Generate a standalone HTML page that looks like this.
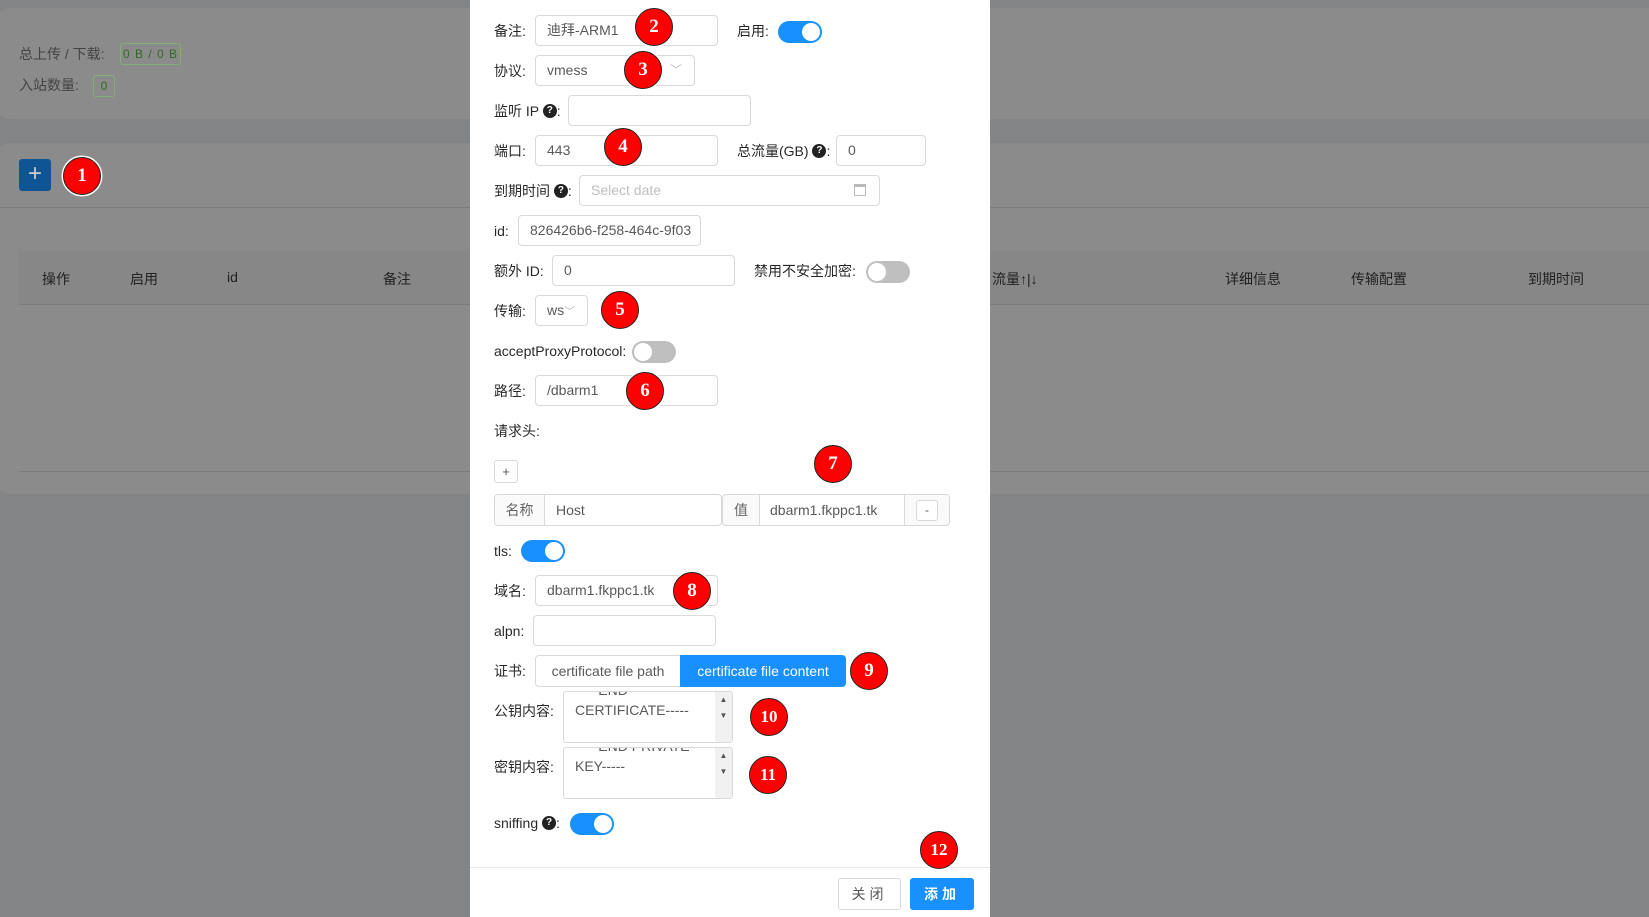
<!DOCTYPE html>
<html><head><meta charset="utf-8"><style>
*{box-sizing:border-box;margin:0;padding:0}
body{width:1649px;height:917px;overflow:hidden;background:#838486;font-family:"Liberation Sans","Noto Sans CJK SC",sans-serif;font-size:14px;color:#333;position:relative}
.a{position:absolute}
.card{position:absolute;background:#8b8b8b;border-radius:22px}
.lbl{position:absolute;color:rgba(0,0,0,.85);font-size:14px;line-height:20px;white-space:nowrap}
.inp{position:absolute;height:31px;border:1px solid #d9d9d9;border-radius:4px;background:#fff;color:#595959;font-size:14px;line-height:29px;padding-left:11px;white-space:nowrap;overflow:hidden}
.tg{position:absolute;width:44px;height:22px;border-radius:11px;background:#1890ff}
.tg::after{content:"";position:absolute;top:2px;right:2px;width:18px;height:18px;border-radius:50%;background:#fff}
.tg.off{background:#bfbfbf}.tg.off::after{right:auto;left:2px}
.q{display:inline-block;width:14px;height:14px;border-radius:50%;background:#222;color:#fff;font-size:10px;line-height:14px;text-align:center;font-weight:bold;vertical-align:top;margin-top:3px}
.rc{position:absolute;width:38px;height:38px;border-radius:50%;background:#f00;border:1.5px solid #222;box-shadow:0 0 0 1.5px #fff;color:#fff;font-family:"Liberation Serif",serif;font-weight:bold;font-size:19px;line-height:35px;text-align:center}
.th{position:absolute;top:269px;color:#222;font-size:14px}
</style></head><body>
<div class="card" style="left:-10px;top:8px;width:1680px;height:111px"></div>
<div class="lbl" style="left:19px;top:44px;color:#444">总上传 / 下载:</div>
<div class="a" style="left:120px;top:43px;width:61px;height:22px;border:1px solid #86ad78;border-radius:3px;color:#2f6e22;font-size:12px;line-height:20px;text-align:center;letter-spacing:1px">0 B / 0 B</div>
<div class="lbl" style="left:19px;top:75px;color:#444">入站数量:</div>
<div class="a" style="left:93px;top:75px;width:22px;height:22px;border:1px solid #86ad78;border-radius:3px;color:#2f6e22;font-size:12px;line-height:20px;text-align:center">0</div>
<div class="card" style="left:-10px;top:143px;width:1680px;height:351px"></div>
<div class="a" style="left:19px;top:159px;width:32px;height:32px;background:#0f5596;border-radius:3px;color:#ccc;font-size:24px;line-height:30px;text-align:center">+</div>
<div class="a" style="left:0;top:207px;width:1649px;height:1px;background:#7c7c7c"></div>
<div class="a" style="left:19px;top:251px;width:1640px;height:54px;background:#878787;border-bottom:1px solid #7b7b7b"></div>
<div class="th" style="left:42px">操作</div><div class="th" style="left:130px">启用</div><div class="th" style="left:227px">id</div><div class="th" style="left:383px">备注</div><div class="th" style="left:992px">流量↑|↓</div><div class="th" style="left:1225px">详细信息</div><div class="th" style="left:1351px">传输配置</div><div class="th" style="left:1528px">到期时间</div>
<div class="a" style="left:19px;top:471px;width:1640px;height:1px;background:#7b7b7b"></div>

<div class="a" style="left:470px;top:0;width:520px;height:917px;background:#fff"></div>
<div class="lbl" style="left:494px;top:21px">备注:</div><div class="inp" style="left:535px;top:15px;width:183px">迪拜-ARM1</div>
<div class="lbl" style="left:737px;top:21px">启用:</div><div class="tg" style="left:778px;top:21px"></div>
<div class="lbl" style="left:494px;top:61px">协议:</div><div class="inp" style="left:535px;top:55px;width:160px">vmess<span class="a" style="left:134px;top:0;color:#bbb;font-size:12px">﹀</span></div>
<div class="lbl" style="left:494px;top:101px">监听 IP <span class="q">?</span>:</div><div class="inp" style="left:568px;top:95px;width:183px"></div>
<div class="lbl" style="left:494px;top:141px">端口:</div><div class="inp" style="left:535px;top:135px;width:183px">443</div>
<div class="lbl" style="left:737px;top:141px">总流量(GB) <span class="q">?</span>:</div><div class="inp" style="left:836px;top:135px;width:90px">0</div>
<div class="lbl" style="left:494px;top:181px">到期时间 <span class="q">?</span>:</div><div class="inp" style="left:579px;top:175px;width:301px;color:#bfbfbf">Select date<span class="a" style="left:274px;top:8px;width:12px;height:12px;border:1px solid #bbb;border-top-width:3px"></span></div>
<div class="lbl" style="left:494px;top:221px">id:</div><div class="inp" style="left:518px;top:215px;width:183px">826426b6-f258-464c-9f03</div>
<div class="lbl" style="left:494px;top:261px">额外 ID:</div><div class="inp" style="left:552px;top:255px;width:183px">0</div>
<div class="lbl" style="left:754px;top:261px">禁用不安全加密:</div><div class="tg off" style="left:866px;top:261px"></div>
<div class="lbl" style="left:494px;top:301px">传输:</div><div class="inp" style="left:535px;top:295px;width:53px">ws<span style="color:#bbb;font-size:11px">﹀</span></div>
<div class="lbl" style="left:494px;top:341px">acceptProxyProtocol:</div><div class="tg off" style="left:632px;top:341px"></div>
<div class="lbl" style="left:494px;top:381px">路径:</div><div class="inp" style="left:535px;top:375px;width:183px">/dbarm1</div>
<div class="lbl" style="left:494px;top:421px">请求头:</div>
<div class="a" style="left:494px;top:460px;width:24px;height:23px;border:1px solid #d9d9d9;border-radius:3px;text-align:center;line-height:21px;font-size:13px;color:#555">+</div>
<div class="a" style="left:494px;top:494px;width:228px;height:32px;border:1px solid #d9d9d9;border-radius:4px;overflow:hidden"><div class="a" style="left:0;top:0;width:50px;height:30px;background:#fafafa;border-right:1px solid #d9d9d9;text-align:center;line-height:30px;color:#666">名称</div><div class="a" style="left:61px;top:0;line-height:30px;color:#595959">Host</div></div>
<div class="a" style="left:722px;top:494px;width:228px;height:32px;border:1px solid #d9d9d9;border-radius:4px;overflow:hidden;background:#fafafa"><div class="a" style="left:0;top:0;width:36px;height:30px;text-align:center;line-height:30px;color:#666">值</div><div class="a" style="left:36px;top:0;width:146px;height:30px;background:#fff;border-left:1px solid #d9d9d9;border-right:1px solid #d9d9d9;line-height:30px;padding-left:10px;color:#595959">dbarm1.fkppc1.tk</div><div class="a" style="left:193px;top:5px;width:22px;height:21px;border:1px solid #d9d9d9;border-radius:3px;background:#fff;text-align:center;line-height:18px;font-size:12px;color:#555">-</div></div>
<div class="lbl" style="left:494px;top:541px">tls:</div><div class="tg" style="left:521px;top:540px"></div>
<div class="lbl" style="left:494px;top:581px">域名:</div><div class="inp" style="left:535px;top:575px;width:183px">dbarm1.fkppc1.tk</div>
<div class="lbl" style="left:494px;top:621px">alpn:</div><div class="inp" style="left:533px;top:615px;width:183px"></div>
<div class="lbl" style="left:494px;top:661px">证书:</div>
<div class="a" style="left:535px;top:655px;width:146px;height:32px;border:1px solid #d9d9d9;border-radius:4px 0 0 4px;text-align:center;line-height:30px;color:#595959">certificate file path</div>
<div class="a" style="left:680px;top:655px;width:166px;height:32px;background:#1890ff;border-radius:0 4px 4px 0;text-align:center;line-height:32px;color:#fff">certificate file content</div>
<div class="lbl" style="left:494px;top:701px">公钥内容:</div>
<div class="a" style="left:563px;top:691px;width:170px;height:52px;border:1px solid #d9d9d9;border-radius:3px;overflow:hidden;color:#595959"><div class="a" style="left:11px;top:-12px;line-height:20px">-----END<br>CERTIFICATE-----</div><div class="a" style="right:0;top:0;width:17px;height:50px;background:#f1f1f1;font-size:8px;color:#555;text-align:center;line-height:16px">▲<br>▼</div></div>
<div class="lbl" style="left:494px;top:757px">密钥内容:</div>
<div class="a" style="left:563px;top:747px;width:170px;height:52px;border:1px solid #d9d9d9;border-radius:3px;overflow:hidden;color:#595959"><div class="a" style="left:11px;top:-12px;line-height:20px">-----END PRIVATE<br>KEY-----</div><div class="a" style="right:0;top:0;width:17px;height:50px;background:#f1f1f1;font-size:8px;color:#555;text-align:center;line-height:16px">▲<br>▼</div></div>
<div class="lbl" style="left:494px;top:813px">sniffing <span class="q">?</span>:</div><div class="tg" style="left:570px;top:813px"></div>
<div class="a" style="left:470px;top:867px;width:520px;height:1px;background:#e8e8e8"></div>
<div class="a" style="left:838px;top:878px;width:63px;height:32px;border:1px solid #d9d9d9;border-radius:3px;text-align:center;line-height:30px;color:#555;letter-spacing:4px">关闭</div>
<div class="a" style="left:910px;top:878px;width:64px;height:32px;background:#1890ff;border-radius:3px;text-align:center;line-height:32px;color:#fff;font-weight:bold;letter-spacing:4px">添加</div>

<div class="rc" style="left:63px;top:157px">1</div>
<div class="rc" style="left:635px;top:8px">2</div>
<div class="rc" style="left:624px;top:51px">3</div>
<div class="rc" style="left:604px;top:128px">4</div>
<div class="rc" style="left:601px;top:291px">5</div>
<div class="rc" style="left:626px;top:372px">6</div>
<div class="rc" style="left:814px;top:445px">7</div>
<div class="rc" style="left:673px;top:572px">8</div>
<div class="rc" style="left:850px;top:652px">9</div>
<div class="rc" style="left:750px;top:698px;font-size:17px">10</div>
<div class="rc" style="left:749px;top:756px;font-size:17px">11</div>
<div class="rc" style="left:920px;top:831px;font-size:17px">12</div>
</body></html>
